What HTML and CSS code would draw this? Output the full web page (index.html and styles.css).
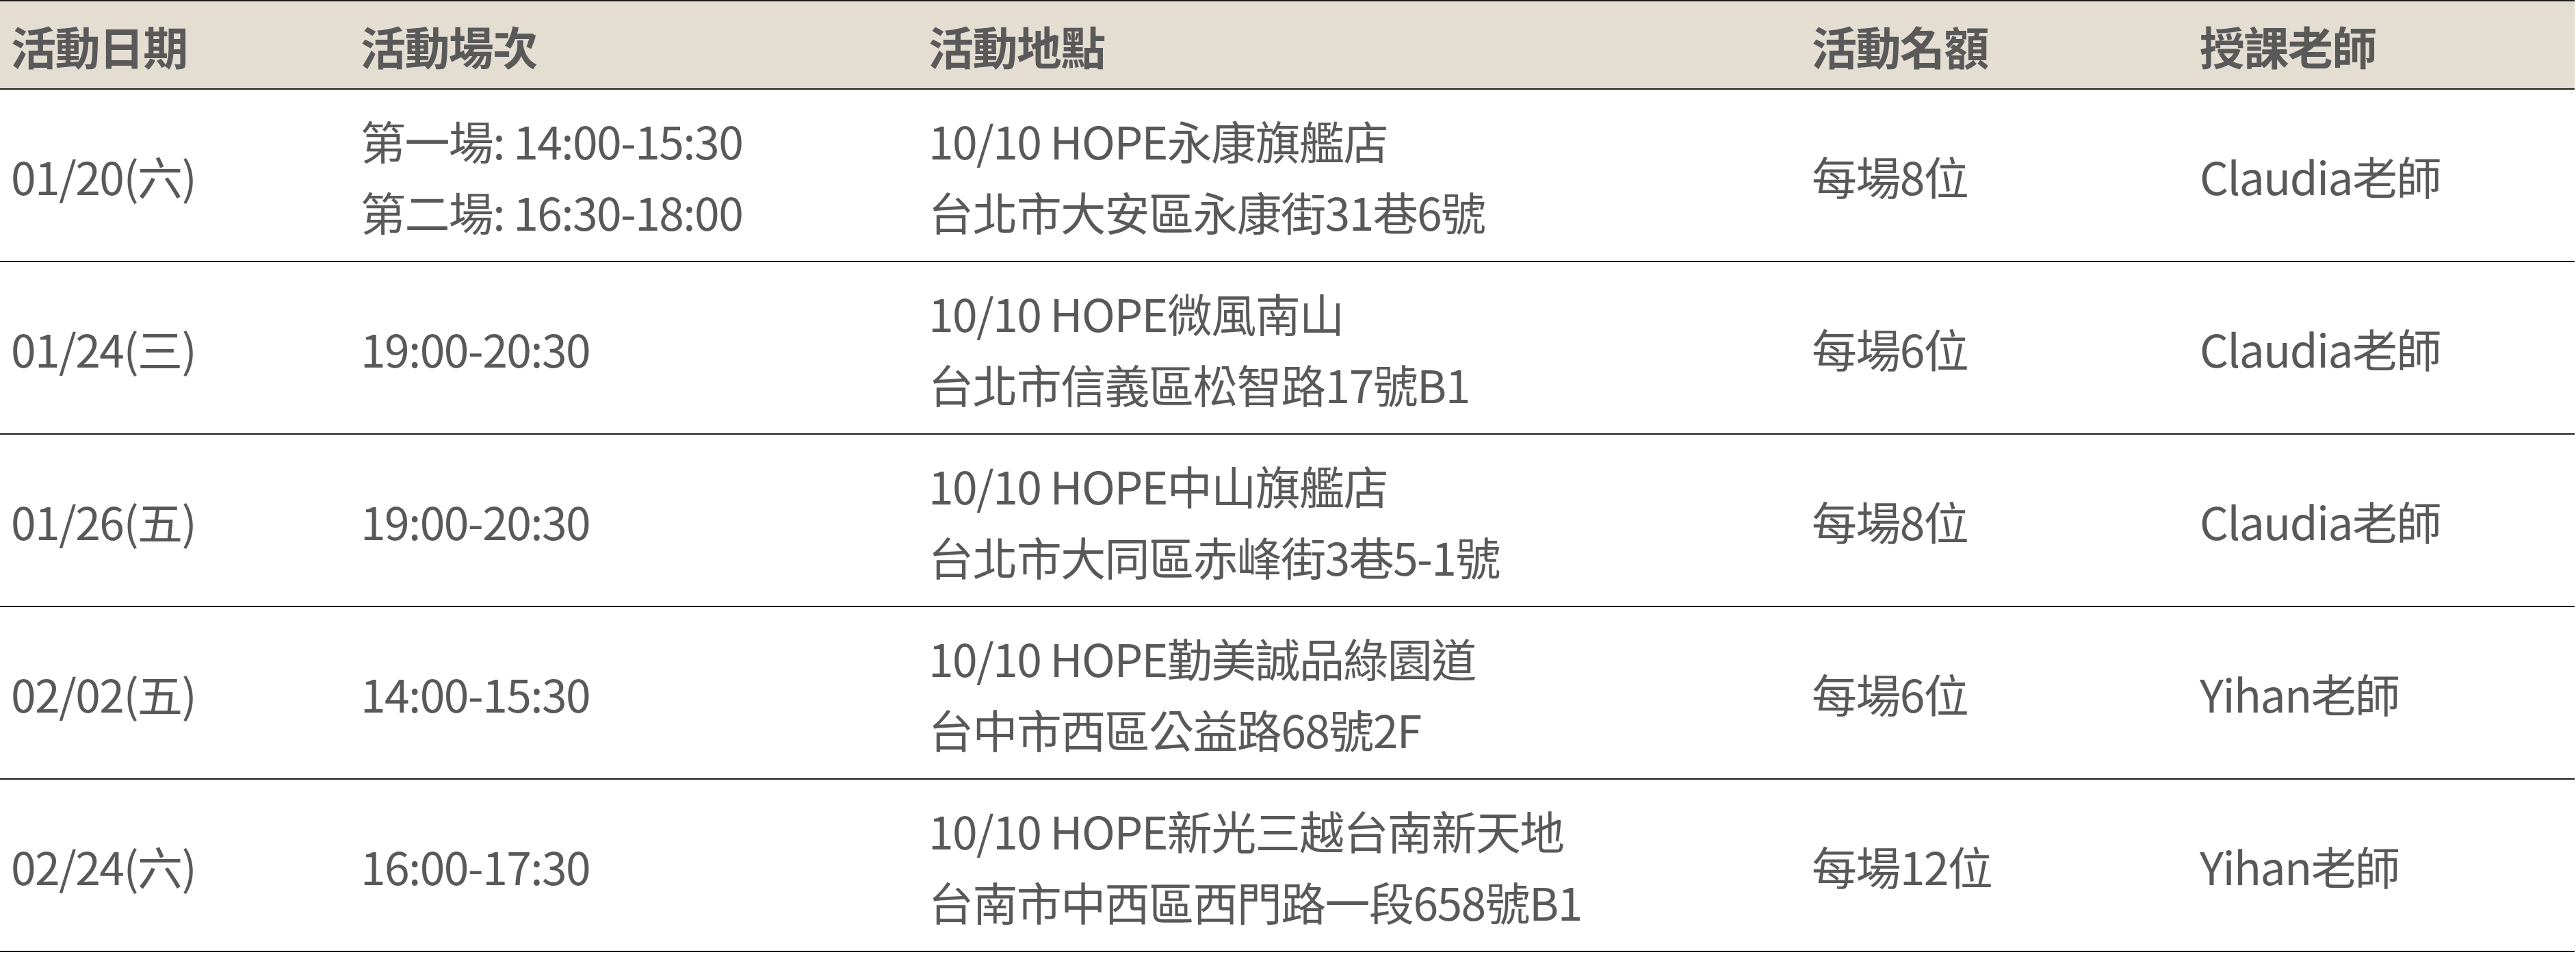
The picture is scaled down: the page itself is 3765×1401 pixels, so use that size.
FILE: index.html
```html
<!DOCTYPE html>
<html lang="zh-Hant">
<head>
    <meta charset="UTF-8">
    <meta name="viewport" content="width=device-width, initial-scale=1.0">
    <title>活動場次</title>
    <link rel="stylesheet" href="styles.css">
</head>
<body>
    <table class="schedule">
        <colgroup>
            <col class="col-date">
            <col class="col-time">
            <col class="col-place">
            <col class="col-seats">
            <col class="col-teacher">
        </colgroup>
        <thead>
            <tr>
                <th>活動日期</th>
                <th>活動場次</th>
                <th>活動地點</th>
                <th>活動名額</th>
                <th>授課老師</th>
            </tr>
        </thead>
        <tbody>
            <tr>
                <td>01/20(六)</td>
                <td>第一場: 14:00-15:30<br>第二場: 16:30-18:00</td>
                <td>10/10 HOPE永康旗艦店<br>台北市大安區永康街31巷6號</td>
                <td>每場8位</td>
                <td>Claudia老師</td>
            </tr>
            <tr>
                <td>01/24(三)</td>
                <td>19:00-20:30</td>
                <td>10/10 HOPE微風南山<br>台北市信義區松智路17號B1</td>
                <td>每場6位</td>
                <td>Claudia老師</td>
            </tr>
            <tr>
                <td>01/26(五)</td>
                <td>19:00-20:30</td>
                <td>10/10 HOPE中山旗艦店<br>台北市大同區赤峰街3巷5-1號</td>
                <td>每場8位</td>
                <td>Claudia老師</td>
            </tr>
            <tr>
                <td>02/02(五)</td>
                <td>14:00-15:30</td>
                <td>10/10 HOPE勤美誠品綠園道<br>台中市西區公益路68號2F</td>
                <td>每場6位</td>
                <td>Yihan老師</td>
            </tr>
            <tr>
                <td>02/24(六)</td>
                <td>16:00-17:30</td>
                <td>10/10 HOPE新光三越台南新天地<br>台南市中西區西門路一段658號B1</td>
                <td>每場12位</td>
                <td>Yihan老師</td>
            </tr>
        </tbody>
    </table>
</body>
</html>
```

FILE: styles.css
```css
body {
    margin: 0;
    background: #fff;
}
.schedule {
    width: 3763px;
    table-layout: fixed;
    border-collapse: collapse;
    border-top: 2px solid #1e1e1e;
    font-family: "Noto Sans CJK TC", sans-serif;
    font-size: 66px;
    line-height: 104px;
    letter-spacing: -1.6px;
    color: #595959;
}
.col-date { width: 511px; }
.col-time { width: 830px; }
.col-place { width: 1291px; }
.col-seats { width: 567px; }
.col-teacher { width: 564px; }
th, td {
    padding: 0 16px;
    text-align: left;
    vertical-align: middle;
    white-space: nowrap;
}
tr {
    border-bottom: 2px solid #1e1e1e;
}
th {
    height: 127px;
    background-color: #e3ddd2;
    font-weight: 700;
}
td {
    height: 250px;
    font-weight: 400;
}
```
